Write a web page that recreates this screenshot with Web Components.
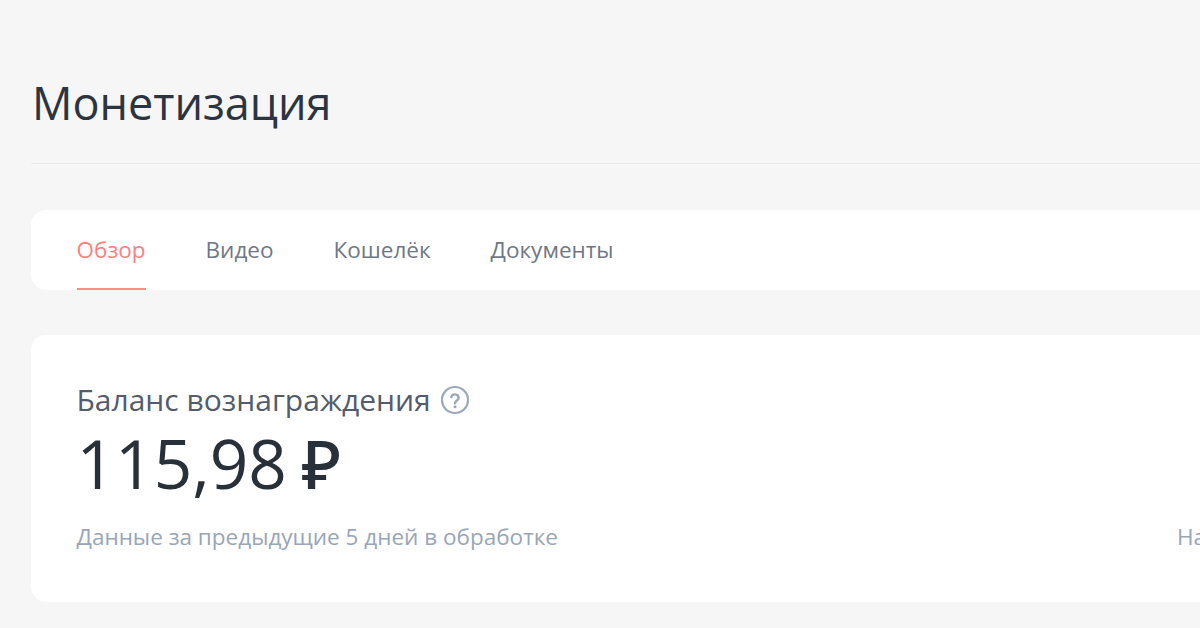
<!DOCTYPE html>
<html lang="ru">
<head>
<meta charset="utf-8">
<title>Монетизация</title>
<style>
html, body { margin: 0; height: 628px; overflow: hidden; background: #f6f6f6; }
body { font-family: "Open Sans", "Noto Sans", sans-serif; }
</style>
</head>
<body>
<monet-page>
  <page-title>Монетизация</page-title>
  <tab-bar>
    <tab-item active>Обзор</tab-item>
    <tab-item>Видео</tab-item>
    <tab-item>Кошелёк</tab-item>
    <tab-item>Документы</tab-item>
  </tab-bar>
  <balance-card>
    <span slot="label">Баланс вознаграждения</span>
    <span slot="sum">115,98 <ruble-sign>₽</ruble-sign></span>
    <span slot="note">Данные за предыдущие 5 дней в обработке</span>
    <span slot="side">Начислено</span>
  </balance-card>
</monet-page>
<script>
class MonetPage extends HTMLElement {
    constructor() {
        super();
        this.attachShadow({mode: "open"}).innerHTML = `
        <style>
        :host {
            display: flex;
            flex-direction: column;
            width: 1500px;
            padding-left: 31px;
            box-sizing: border-box;
        }
        </style>
        <slot></slot>`;
    }
}

class PageTitle extends HTMLElement {
    constructor() {
        super();
        this.attachShadow({mode: "open"}).innerHTML = `
        <style>
        :host {
            display: block;
            height: 164px;
            box-sizing: border-box;
            padding: 72px 0 0 1px;
            border-bottom: 1px solid #e9ebee;
            font-size: 45px;
            line-height: 62px;
            color: #2c3440;
        }
        </style>
        <slot></slot>`;
    }
}

class TabBar extends HTMLElement {
    constructor() {
        super();
        this.attachShadow({mode: "open"}).innerHTML = `
        <style>
        :host {
            display: flex;
            gap: 60px;
            height: 79.5px;
            margin-top: 46px;
            padding-left: 45.5px;
            background: #fff;
            border-radius: 15px;
            box-sizing: border-box;
        }
        </style>
        <slot></slot>`;
    }
}

class TabItem extends HTMLElement {
    constructor() {
        super();
        this.attachShadow({mode: "open"}).innerHTML = `
        <style>
        :host {
            display: block;
            height: 80px;
            box-sizing: border-box;
            padding-top: 25px;
            font-size: 22.5px;
            line-height: 30px;
            color: #6f7885;
        }
        :host([active]) {
            color: #ff7f7f;
            border-bottom: 2px solid #ff8a8a;
        }
        </style>
        <slot></slot>`;
    }
}

class RubleSign extends HTMLElement {
    constructor() {
        super();
        this.attachShadow({mode: "open"}).innerHTML = `
        <style>
        :host {
            display: inline;
            margin-left: -3px;
            font-family: "Noto Sans", sans-serif;
            font-weight: 500;
        }
        </style>
        <slot></slot>`;
    }
}

class BalanceCard extends HTMLElement {
    constructor() {
        super();
        this.attachShadow({mode: "open"}).innerHTML = `
        <style>
        :host {
            display: flex;
            flex-direction: column;
            height: 267px;
            margin-top: 45.5px;
            padding: 44px 0 0 45.5px;
            background: #fff;
            border-radius: 15px;
            box-sizing: border-box;
        }
        .label {
            display: flex;
            align-items: center;
            gap: 9px;
            font-size: 30px;
            line-height: 42px;
            color: #525c6a;
        }
        .label svg { display: block; width: 30px; height: 30px; }
        .sum {
            font-size: 67.5px;
            line-height: 84px;
            color: #283039;
        }
        .foot {
            display: grid;
            grid-template-columns: 1100.5px auto;
            margin-top: 17px;
            font-size: 22.5px;
            line-height: 30px;
            color: #97a6b8;
        }
        </style>
        <div class="label">
            <slot name="label"></slot>
            <svg viewBox="0 0 30 30" fill="none">
                <circle cx="15" cy="15" r="13" stroke="#9aa9ba" stroke-width="2.2"/>
                <path d="M11.3 12a3.8 3.8 0 0 1 7.4 .8c0 2.6-3.7 3-3.7 5.4" stroke="#9aa9ba" stroke-width="2.4" stroke-linecap="round"/>
                <circle cx="15" cy="21.8" r="1.5" fill="#9aa9ba"/>
            </svg>
        </div>
        <div class="sum"><slot name="sum"></slot></div>
        <div class="foot">
            <slot name="note"></slot>
            <slot name="side"></slot>
        </div>`;
    }
}

customElements.define("monet-page", MonetPage);
customElements.define("page-title", PageTitle);
customElements.define("tab-bar", TabBar);
customElements.define("tab-item", TabItem);
customElements.define("ruble-sign", RubleSign);
customElements.define("balance-card", BalanceCard);
</script>
</body>
</html>
